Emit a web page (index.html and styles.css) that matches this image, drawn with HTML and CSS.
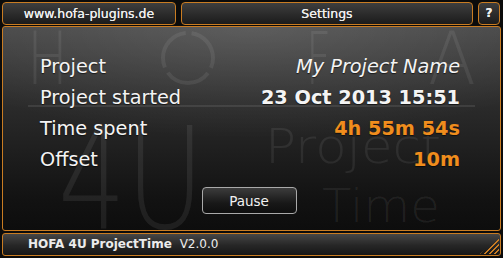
FILE: index.html
```html
<!DOCTYPE html>
<html lang="en">
<head>
  <meta charset="UTF-8">
  <meta name="viewport" content="width=device-width, initial-scale=1.0">
  <title>HOFA 4U ProjectTime</title>
  <link rel="stylesheet" href="styles.css">
</head>
<body>
  <div class="plugin">
    <div class="topbar">
      <button class="tab tab-link">www.hofa-plugins.de</button>
      <button class="tab tab-settings">Settings</button>
      <button class="tab tab-help">?</button>
    </div>

    <div class="panel">
      <svg class="watermark" viewBox="3 27 497 203" aria-hidden="true">
        <text x="27" y="84" font-size="73" textLength="41" lengthAdjust="spacingAndGlyphs">H</text>
        <circle class="ring" cx="188" cy="58" r="25" stroke-dasharray="46.3 6" stroke-dashoffset="36.2"></circle>
        <text x="306" y="84" font-size="73" textLength="25" lengthAdjust="spacingAndGlyphs">F</text>
        <text x="428" y="84" font-size="73" textLength="48" lengthAdjust="spacingAndGlyphs">A</text>
        <line class="rule" x1="28" y1="106" x2="475" y2="106"></line>
        <text x="58" y="228" font-size="140" textLength="146" lengthAdjust="spacingAndGlyphs">4U</text>
        <text x="265" y="163" font-size="48" textLength="176" lengthAdjust="spacingAndGlyphs">Project</text>
        <text x="322" y="222" font-size="46" textLength="118" lengthAdjust="spacingAndGlyphs">Time</text>
      </svg>

      <div class="rows">
        <div class="row"><span class="label">Project</span><span class="value name">My Project Name</span></div>
        <div class="row"><span class="label">Project started</span><span class="value strong">23 Oct 2013 15:51</span></div>
        <div class="row"><span class="label">Time spent</span><span class="value strong accent">4h 55m 54s</span></div>
        <div class="row"><span class="label">Offset</span><span class="value strong accent">10m</span></div>
      </div>

      <div class="actions">
        <button class="pause">Pause</button>
      </div>
    </div>

    <div class="footer">
      <span class="product">HOFA 4U ProjectTime</span>
      <span class="version">V2.0.0</span>
      <span class="grip"></span>
    </div>
  </div>
</body>
</html>
```

FILE: styles.css
```css
:root {
  --orange: #c97c22;
  --accent: #f08d1d;
  --text: #f4f4f4;
}
* { box-sizing: border-box; }
body {
  margin: 0;
  background: #0b0b0b;
  font-family: 'DejaVu Sans', Verdana, sans-serif;
  color: var(--text);
}
.plugin {
  width: 503px;
  height: 258px;
  padding: 2px;
  display: flex;
  flex-direction: column;
}

/* top buttons */
.topbar { display: flex; gap: 5px; height: 23px; margin-bottom: 1px; }
.tab {
  font-family: inherit;
  font-size: 12.5px;
  color: #ededed;
  background: linear-gradient(#3e3e3e, #1b1b1b);
  border: 1px solid var(--orange);
  border-radius: 4px;
  padding: 0;
  height: 23px;
  line-height: 21px;
  text-align: center;
  text-shadow: 0 0 0.4px #fff;
}
.tab-link { width: 174px; }
.tab-settings { width: 292px; }
.tab-help { width: 22px; font-weight: bold; font-size: 12px; }

/* main panel */
.panel {
  position: relative;
  height: 205px;
  width: 499px;
  border: 1px solid var(--orange);
  border-radius: 3px;
  background:
    radial-gradient(ellipse 70% 55% at 50% 0%, rgba(255,255,255,0.12), rgba(255,255,255,0) 100%),
    linear-gradient(#474747, #2a2a2a 40%, #121212 85%, #0d0d0d);
  padding: 24px 40px 0 37px;
  overflow: hidden;
}
.watermark {
  position: absolute;
  left: 0; top: 0;
  width: 497px; height: 203px;
  overflow: visible;
  font-family: 'DejaVu Sans', Verdana, sans-serif;
  font-weight: 200;
  fill: rgba(255,255,255,0.075);
}
.watermark .ring { fill: none; stroke: rgba(255,255,255,0.075); stroke-width: 4; }
.watermark .rule { stroke: rgba(255,255,255,0.09); stroke-width: 2; }

.rows { position: relative; }
.row {
  display: flex;
  justify-content: space-between;
  font-size: 19.3px;
  line-height: 31px;
  height: 31px;
  text-shadow: 0 1px 1px rgba(0,0,0,0.6);
}
.value.name { font-style: italic; }
.value.strong { font-weight: bold; }
.value.accent { color: var(--accent); }

.actions { position: relative; display: flex; justify-content: center; margin-top: 12px; padding-right: 2px; }
.pause {
  width: 95px;
  height: 27px;
  font-family: inherit;
  font-size: 13.5px;
  color: #f2f2f2;
  background: linear-gradient(#3c3c3c, #181818 60%, #0e0e0e);
  border: 1px solid #a9a9a9;
  border-radius: 4px;
  padding: 0;
}

/* footer */
.footer {
  position: relative;
  margin-top: 2px;
  height: 23px;
  border: 1px solid var(--orange);
  border-radius: 3px;
  background: linear-gradient(#464646, #262626 55%, #161616);
  padding-left: 25px;
  font-size: 12px;
  line-height: 21px;
  color: #ececec;
}
.product { font-weight: bold; }
.version { margin-left: 4px; }
.grip {
  position: absolute;
  right: 1px; bottom: 1px;
  width: 19px; height: 16px;
  background: repeating-linear-gradient(135deg, var(--orange) 0 1.5px, transparent 1.5px 3.5px);
  clip-path: polygon(100% 0, 100% 100%, 0 100%);
}
```
